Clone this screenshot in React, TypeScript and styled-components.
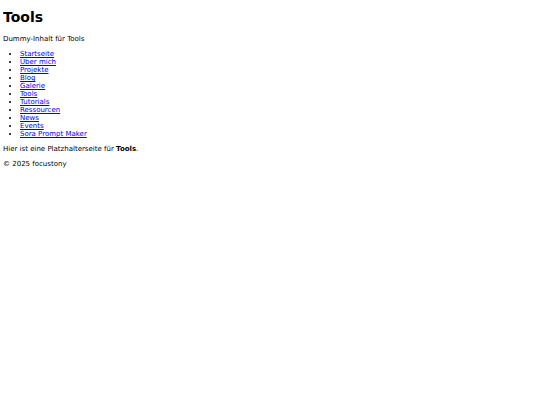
import React from "react";
import styled, { createGlobalStyle } from "styled-components";

const GlobalStyle = createGlobalStyle`
  html, body {
    background: #ffffff;
  }
  body {
    margin: 3px;
    font-family: "DejaVu Sans", sans-serif;
    font-size: 7px;
    color: #000000;
  }
`;

const Page = styled.main`
  display: block;
`;

const Title = styled.h1`
  font-size: 14px;
  font-weight: bold;
  margin: 6px 0 10px;
`;

const Text = styled.p`
  margin: 7px 0;
`;

const NavList = styled.ul`
  margin: 7px 0;
  padding-left: 17px;
  list-style: disc;
`;

const NavLink = styled.a`
  color: #0000ee;
  text-decoration: underline;
`;

const items = [
  "Startseite",
  "Über mich",
  "Projekte",
  "Blog",
  "Galerie",
  "Tools",
  "Tutorials",
  "Ressourcen",
  "News",
  "Events",
  "Sora Prompt Maker",
];

export default function App() {
  return (
    <>
      <GlobalStyle />
      <Page>
        <Title>Tools</Title>
        <Text>Dummy-Inhalt für Tools</Text>
        <NavList>
          {items.map((it) => (
            <li key={it}>
              <NavLink href="#">{it}</NavLink>
            </li>
          ))}
        </NavList>
        <Text>
          Hier ist eine Platzhalterseite für <strong>Tools</strong>.
        </Text>
        <Text>© 2025 focustony</Text>
      </Page>
    </>
  );
}
